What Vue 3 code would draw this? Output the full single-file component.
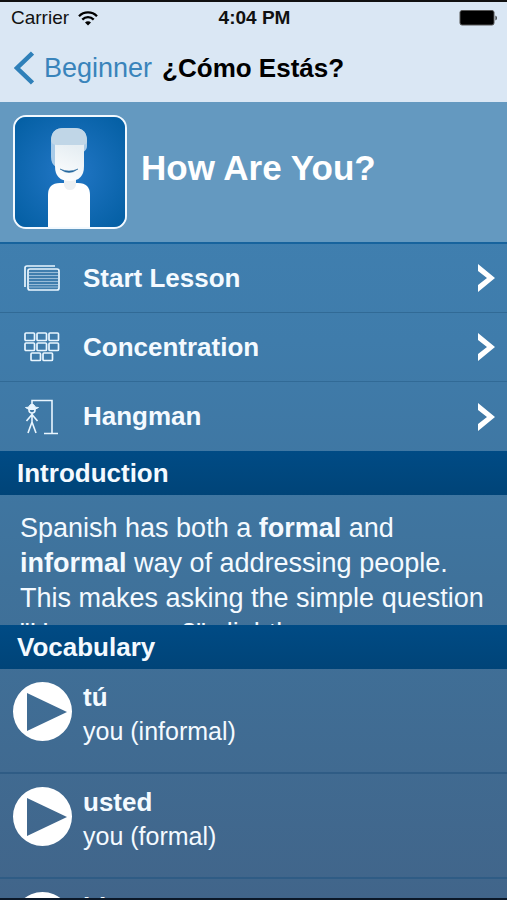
<script setup>
const activities = [
  { id: 'lesson', label: 'Start Lesson' },
  { id: 'concentration', label: 'Concentration' },
  { id: 'hangman', label: 'Hangman' },
]

const words = [
  { term: 'tú', meaning: 'you (informal)' },
  { term: 'usted', meaning: 'you (formal)' },
  { term: 'bien', meaning: 'well' },
]

const cards = [
  [2, 4], [14, 4], [26, 4],
  [2, 14], [14, 14], [26, 14],
  [8, 24], [20, 24],
]
</script>

<template>
  <div class="screen">
    <div class="status">
      <div class="carrier">
        <span>Carrier</span>
        <svg width="20" height="15" viewBox="0 0 20 15" aria-hidden="true">
          <path d="M1 5.2a12.6 12.6 0 0 1 18 0" fill="none" stroke="#000" stroke-width="2.3" />
          <path d="M4.3 8.6a8 8 0 0 1 11.4 0" fill="none" stroke="#000" stroke-width="2.3" />
          <path d="M7 11.4a4.2 4.2 0 0 1 6 0L10 14.6z" />
        </svg>
      </div>
      <span class="time">4:04 PM</span>
      <svg class="battery" width="39" height="16" viewBox="0 0 39 16" aria-hidden="true">
        <rect x="1" y="0.5" width="34" height="14.5" rx="2" fill="#000" stroke="#555" />
        <path d="M36.500 5.500a3 3 0 0 1 0 5z" fill="#222" />
      </svg>
    </div>

    <header class="nav">
      <a class="back" href="#beginner">
        <svg width="20" height="34" viewBox="0 0 20 34" aria-hidden="true">
          <path d="M18.500 2L3 17l15.500 15" fill="none" stroke="#2f80b9" stroke-width="4.500" />
        </svg>
        <span>Beginner</span>
      </a>
      <h1>¿Cómo Estás?</h1>
    </header>

    <main class="content">
      <section class="hero">
        <svg class="avatar" viewBox="0 0 110 110" aria-hidden="true">
          <defs>
            <radialGradient id="glow" cx="50%" cy="50%" r="65%">
              <stop offset="0" stop-color="#2377c6" />
              <stop offset="1" stop-color="#0560a5" />
            </radialGradient>
            <linearGradient id="face" x1="0" y1="1" x2="0.3" y2="0">
              <stop offset="0" stop-color="#fff" />
              <stop offset="1" stop-color="#e6eef3" />
            </linearGradient>
          </defs>
          <rect width="110" height="110" fill="url(#glow)" />
          <path d="M33 110V78q0-12 12-12H63q12 0 12 12v32z" fill="#fff" />
          <path d="M49 59h12v9q-1 5-6 5t-6-5z" fill="#edf0f2" />
          <path d="M36 24q0-13 13-13H59q13 0 13 13v5q0 4-4 6L41 50q-5-3-5-10z" fill="#a9cbe8" />
          <path d="M40 25H69V49q0 15-14.500 15Q40 64 40 49z" fill="url(#face)" />
          <path d="M36 24q0-13 13-13H59q13 0 13 13c0 3-2 4-6 4H42q-5 0-6-4z" fill="#c0d6e7" />
          <path d="M45 52q9 7 18 0q-9 4-18 0z" fill="#26689e" stroke="#26689e" stroke-width="0.500" />
        </svg>
        <h2>How Are You?</h2>
      </section>

      <nav class="activities">
        <a v-for="item in activities" :key="item.id" class="activity" :href="'#' + item.id">
          <svg class="icon" width="38" height="36" viewBox="0 0 38 36" fill="none" stroke="#e9f6ff" aria-hidden="true">
            <g v-if="item.id === 'lesson'" stroke-width="1.700">
              <path d="M2 27V8q0-2 2-2H32" />
              <rect x="5" y="9" width="31" height="21" rx="2" />
              <path d="M6 12.500H35M6 15.500H35M6 18.500H35M6 21.500H35M6 24.500H35M6 27H35" stroke-width="0.700" opacity="0.75" />
            </g>
            <g v-else-if="item.id === 'concentration'" stroke-width="1.700">
              <rect v-for="card in cards" :key="card.join()" :x="card[0]" :y="card[1]" width="9.500" height="7.500" rx="1" />
            </g>
            <g v-else stroke-width="1.600">
              <path d="M9 5V1.500H29V34M21 34.500H35" />
              <path d="M2.500 8.500q3 1 5-3h3q2 4 5 3l-4 2H6z" fill="#e9f6ff" stroke-width="1" />
              <circle cx="9" cy="11" r="3" />
              <path d="M9 14V24M3.500 22L9 15.500L14.500 22M5 34L9 23L13 34" />
            </g>
          </svg>
          <span>{{ item.label }}</span>
          <svg class="chevron" width="18" height="30" viewBox="0 0 18 30" aria-hidden="true">
            <path d="M1 1L18 15L1 29V22L10 15L1 8z" fill="#fff" />
          </svg>
        </a>
      </nav>

      <h3 class="section-title">Introduction</h3>
      <div class="intro">
        <p>
          Spanish has both a <b>formal</b> and <b>informal</b> way of addressing people.
          This makes asking the simple question "How are you?" slightly more
        </p>
      </div>

      <h3 class="section-title">Vocabulary</h3>
      <ul class="words">
        <li v-for="word in words" :key="word.term">
          <button type="button" :aria-label="'Play ' + word.term">
            <svg viewBox="0 0 59 59" aria-hidden="true">
              <path fill="#fff" fill-rule="evenodd" d="M29.500 0a29.500 29.500 0 1 1 0 59a29.500 29.500 0 1 1 0-59zM14 11V49L54 30z" />
            </svg>
          </button>
          <div class="word">
            <strong>{{ word.term }}</strong>
            <span>{{ word.meaning }}</span>
          </div>
        </li>
      </ul>
    </main>
  </div>
</template>

<style>
body {
  margin: 0;
}
</style>

<style scoped>
.screen {
  box-sizing: border-box;
  display: flex;
  flex-direction: column;
  height: 100vh;
  overflow: hidden;
  border-top: 2px solid #111;
  border-bottom: 2px solid #0b1828;
  background: #dae7f4;
  color: #f4faff;
  font-family: "Liberation Sans", Arial, sans-serif;
  font-size: 26px;
}

h1,
h2,
h3,
p,
ul {
  margin: 0;
  padding: 0;
}

a {
  color: inherit;
  text-decoration: none;
}

svg {
  display: block;
  flex: none;
}

.status {
  display: grid;
  grid-template-columns: 1fr auto 1fr;
  align-items: center;
  flex: none;
  height: 32px;
  padding: 0 9px 0 11px;
  color: #111;
  font-size: 19px;
}

.carrier {
  display: flex;
  align-items: center;
  gap: 9px;
}

.time {
  font-weight: bold;
}

.battery {
  justify-self: end;
}

.nav {
  display: flex;
  align-items: center;
  flex: none;
  gap: 10px;
  height: 68px;
  padding: 0 14px;
}

.back {
  display: flex;
  align-items: center;
  gap: 10px;
  color: #3984bb;
  font-size: 27px;
}

h1 {
  color: #000;
  font-size: 26px;
}

.content {
  display: flex;
  flex: 1;
  flex-direction: column;
  min-height: 0;
  background: linear-gradient(#4082b4, #3f7cab 30%, #3f729b 60%, #41658a);
}

.hero {
  display: flex;
  align-items: center;
  flex: none;
  gap: 14px;
  height: 140px;
  padding: 0 13px;
  background: #6499c0;
  border-bottom: 2px solid #17639d;
}

.avatar {
  width: 110px;
  height: 110px;
  border: 2px solid #f2f9ff;
  border-radius: 13px;
}

h2 {
  padding-bottom: 8px;
  color: #fff;
  font-size: 35px;
}

.activities {
  flex: none;
}

.activity {
  box-sizing: border-box;
  display: flex;
  align-items: center;
  height: 69px;
  padding: 0 12px 0 23px;
  border-bottom: 1px solid #316a96;
  font-weight: bold;
}

.activity:last-child {
  border-bottom: 0;
}

.icon {
  margin-right: 22px;
}

.chevron {
  margin-left: auto;
}

.section-title {
  flex: none;
  height: 44px;
  padding-left: 17px;
  background: linear-gradient(#004b85, #004478);
  font-size: 26px;
  line-height: 44px;
}

.intro {
  flex: none;
  height: 130px;
  overflow: hidden;
}

.intro p {
  padding: 16px 20px;
  font-size: 27px;
  line-height: 35px;
}

.words {
  flex: 1;
  min-height: 0;
  overflow: hidden;
  list-style: none;
}

.words li {
  box-sizing: border-box;
  display: flex;
  align-items: flex-start;
  gap: 11px;
  height: 105px;
  padding: 11px 13px;
  border-bottom: 2px solid #2f5c85;
}

button {
  flex: none;
  width: 59px;
  height: 59px;
  margin-top: 2px;
  padding: 0;
  border: 0;
  border-radius: 50%;
  background: none;
}

.word {
  display: flex;
  flex-direction: column;
  line-height: 34px;
}

.word span {
  font-size: 25px;
}
</style>
